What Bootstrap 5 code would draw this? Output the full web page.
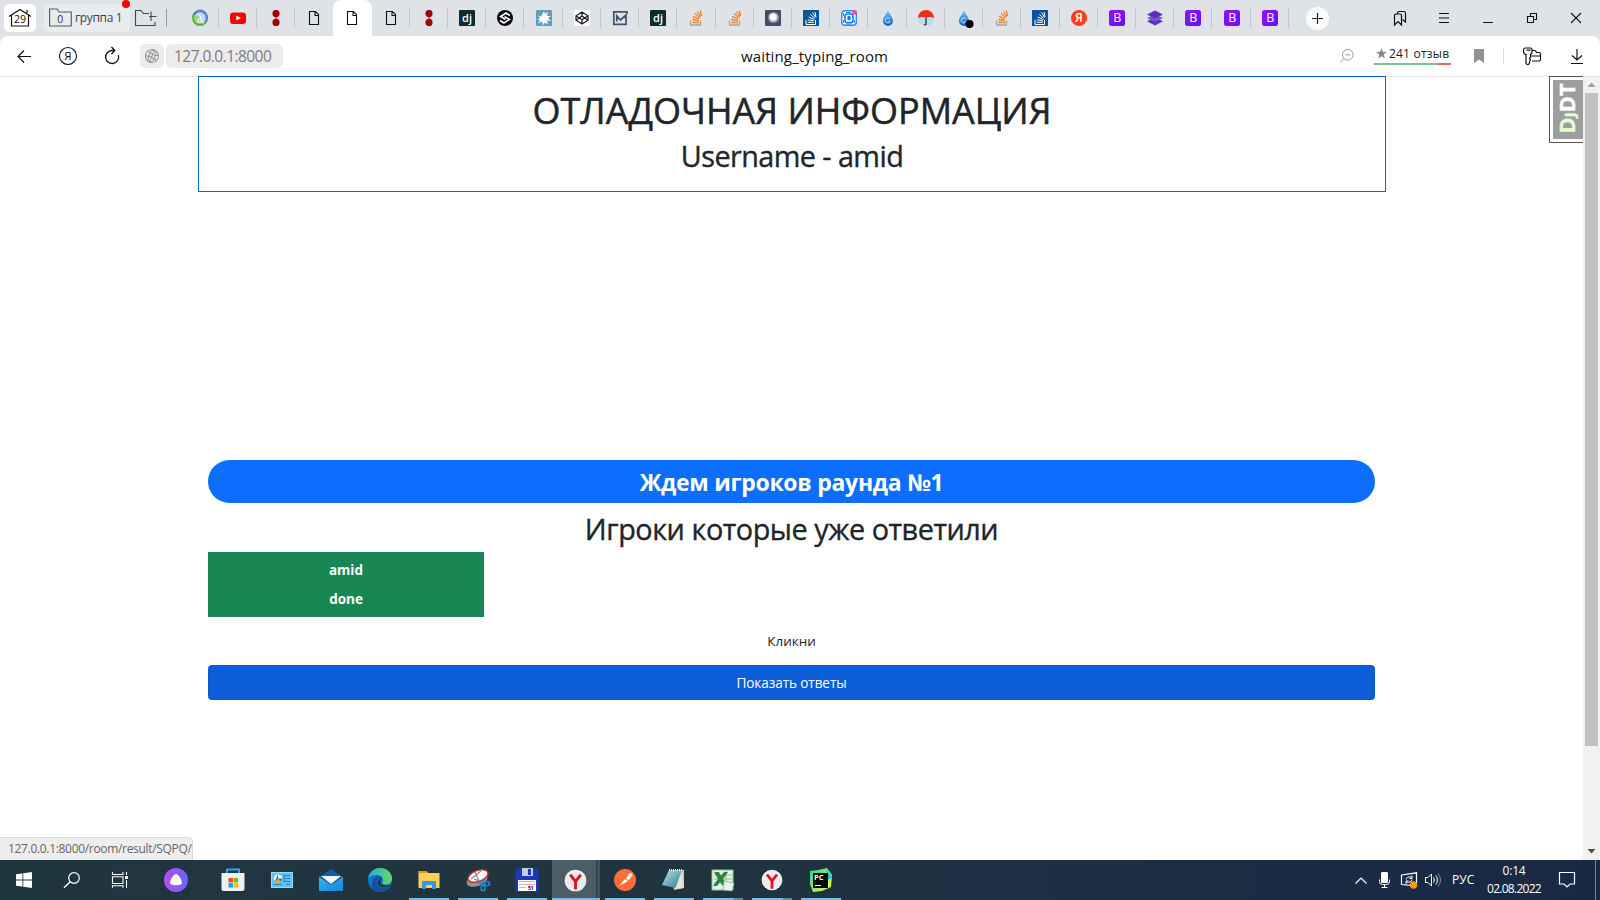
<!DOCTYPE html>
<html lang="ru">
<head>
<meta charset="utf-8">
<title>waiting_typing_room</title>
<link href="https://cdn.jsdelivr.net/npm/bootstrap@5.3.0/dist/css/bootstrap.min.css" rel="stylesheet">
<style>
body{width:1600px;height:900px;overflow:hidden;font-family:"Open Sans","Noto Sans",sans-serif;background:#dfe1e6;color:#212529}
svg{display:block;flex:none;overflow:visible}
svg text{font-family:"Open Sans","Noto Sans",sans-serif}
.tabstrip{height:36px;background:#dfe2e7}
.home{width:32px;height:28px;margin:4px 0 0 4px;background:#fff;border-radius:5px}
.group{width:86px;height:28px;margin:4px 0 0 8px;background:#e9ecef;border-radius:5px;font-size:12px;letter-spacing:-.35px;color:#444}
.group .dot{position:absolute;width:8px;height:8px;border-radius:50%;background:#f00;right:0;top:-4px}
.newgroup{width:50px;height:36px}
.tabs{width:1108.5px;height:36px;margin-left:.5px}
.tab-cell{flex:1 1 0;height:36px;position:relative;display:flex;align-items:center;justify-content:center}
.tab-cell::after{content:"";position:absolute;right:0;top:8px;height:20px;width:1px;background:#c3c6ca}
.tab-cell.current{background:#fff;border-radius:8px 8px 0 0}
.tab-cell.current::after,.tab-cell.before::after{display:none}
.plus{width:23px;height:23px;border-radius:50%;background:#fafbfc;margin-left:16.5px}
.cell44{width:44px;display:flex;align-items:center;justify-content:center}
.toolbar{height:40px;background:#fff;border-radius:8px 8px 0 0;position:relative}
.site{width:24px;height:24px;background:#ececec;border-radius:5px}
.url{width:117px;height:24px;background:#ececec;border-radius:5px;color:#7c7c7c;font-size:15.5px;line-height:25px;padding-left:8px;letter-spacing:-.55px;white-space:nowrap}
.page-title{position:absolute;left:741px;top:9px;font-size:15px;line-height:22px;color:#111;letter-spacing:.13px;white-space:nowrap}
.reviews{width:77px;height:20px;font-size:12px;line-height:18px;color:#222;letter-spacing:.2px;border-bottom:2px solid;border-image:linear-gradient(90deg,#74c794 82%,#ec6558 82%) 1;white-space:nowrap}
.viewport{height:784px;background:linear-gradient(#e4e4e4 0 1px,#fff 1px);position:relative}
.content{width:1188px;margin-left:198px}
.debug{height:116px;border:1px solid #0b66dd;background:#fff;padding-top:12px;text-align:center}
.debug h1{font-size:36px;line-height:43px;margin:0 0 6px;font-weight:500;white-space:nowrap;-webkit-text-stroke:.5px #212529}
.h-mid{font-size:28.8px;line-height:35px;font-weight:500;margin:0;white-space:nowrap;letter-spacing:-.46px;-webkit-text-stroke:.35px #212529}
.debug .h-mid{letter-spacing:-.57px}
.game{padding:268px 11px 0 10px;text-align:center}
.pill{height:43px;border-radius:22px;background:#0d6efd;color:#fff;font-weight:700;font-size:23px;line-height:45px;letter-spacing:-.28px;white-space:nowrap}
.players{width:276px;height:65px;background:#198754;color:#fff;font-weight:700;font-size:13.5px;line-height:29px;padding-top:4px}
.hint{font-size:13.5px;line-height:22px;margin:13px 0}
.answers{height:35px;background:#0b5ed7;border:1px solid #0a58ca;border-radius:3.6px;font-size:13.6px;letter-spacing:-.1px;line-height:20px;padding:7px 6px 5px;color:#fff}
.scroll-col{position:absolute;right:0;top:1px;width:17px;height:783px;background:#f1f1f1}
.thumb{width:13px;height:653px;background:#c1c1c1;margin:4px auto 0}
.arr{height:12px}
.djdt{position:absolute;left:1549px;top:0;width:34px;height:67px;border:1px solid #555;border-right:0;background:#fff;padding:3px 0 3px 3px}
.djdt>div{background:#9e9e9e;height:59px}
.status{position:absolute;left:0;bottom:0;width:193px;height:23px;background:#eee;border:1px solid #d8d8d8;border-width:1px 1px 0 0;border-radius:0 5px 0 0;font-size:12px;letter-spacing:-.32px;line-height:21px;color:#666;padding-left:8px;white-space:nowrap}
.taskbar{height:40px;background:linear-gradient(90deg,#20363f,#203440 45%,#1b2b43 80%,#192945);color:#fff}
.sys{width:48px;height:40px;display:flex;align-items:center;justify-content:center}
.app{width:49px;height:40px;display:flex;align-items:center;justify-content:center;position:relative}
.open::after{content:"";position:absolute;left:5px;width:40px;bottom:0;height:2px;background:#76b9ed}
.app.front{background:linear-gradient(90deg,transparent 0 1px,#4c5d66 1px 45px,#2d3f49 45px 46px,#42535c 46px)}
.front::after{left:1px;width:48px}
.double::after{background:linear-gradient(90deg,#76b9ed 31px,#5488b5 31px)}
.tray{font-size:12px;white-space:nowrap}
.clock{width:64px;text-align:center;line-height:18px;letter-spacing:-.2px}
.date{letter-spacing:-.72px}
</style>
</head>
<body class="d-flex flex-column">
<svg width="0" height="0" class="position-absolute">
<defs>
<linearGradient id="gB" x2="1" y2="1"><stop stop-color="#9013fe"/><stop offset="1" stop-color="#6610f2"/></linearGradient>
<linearGradient id="gDrop" x2="0" y2="1"><stop stop-color="#7cc8ff"/><stop offset="1" stop-color="#0a5fc4"/></linearGradient>
<linearGradient id="gAlice" x2="1" y2="0"><stop stop-color="#b34df5"/><stop offset="1" stop-color="#6b63ff"/></linearGradient>
<linearGradient id="gMail" x2="1" y2="1"><stop stop-color="#35b5ee"/><stop offset="1" stop-color="#1584d8"/></linearGradient>
<linearGradient id="gEdge" x2="1" y2="0"><stop stop-color="#29a8e8"/><stop offset="1" stop-color="#63dc5c"/></linearGradient>
<linearGradient id="gPc" x2="1" y2="1"><stop stop-color="#21d789"/><stop offset="1" stop-color="#fcf84a"/></linearGradient>
<linearGradient id="gNote" x2="1" y2="1"><stop stop-color="#b8e2e8"/><stop offset="1" stop-color="#2f7d92"/></linearGradient>
<symbol id="doc" viewBox="0 0 16 16"><path d="M3.500 1.500h6l3 3v10h-9zM9 1.500v4h3.500" fill="none" stroke="#111" stroke-width="1.100"/></symbol>
<symbol id="reds" viewBox="0 0 16 16"><path d="M8 4v8" stroke="#a30000"/><circle cx="8" cy="3.400" r="3.600" fill="#a80000"/><circle cx="8" cy="12.400" r="3.600" fill="#a80000"/></symbol>
<symbol id="dj" viewBox="0 0 16 16"><rect width="16" height="16" rx="1" fill="#0e2e24"/><text x="8" y="11.600" font-size="11" font-weight="600" fill="#fff" text-anchor="middle">dj</text></symbol>
<symbol id="so" viewBox="0 0 16 16"><path d="M2.500 10.500v4.500h10v-4.500" fill="none" stroke="#a2a5a9" stroke-width="1.300"/><path d="M4.500 12.500h6.500M4.200 9.500l6.600 1.200M5 6.300l6 2.900M7 3.500l5 4.300M9.300 1.500l3.600 5.200M12.300.5l1.300 5.500" stroke="#f48024" stroke-width="1.300"/></symbol>
<symbol id="sob" viewBox="0 0 16 16"><path fill="#04559b" d="M0 0h16v16H0z"/><path d="M3 10v4.500h9.500V10M4.700 12.300h6M4.800 9.800l6 1M5.700 7l5.500 2.500M7.300 4.500l4.500 3.900M9.400 2.500l3.300 5M12 2l1 5" fill="none" stroke="#fff" stroke-width="1"/></symbol>
<symbol id="bs" viewBox="0 0 16 16"><rect width="16" height="16" rx="2.500" fill="url(#gB)"/><text x="8.200" y="12.300" font-size="12.500" fill="#fff" text-anchor="middle">B</text></symbol>
<symbol id="drop" viewBox="0 0 16 16"><path d="M8 0C7 4 3 7 3 11a5 5 0 0 0 10 0C13 7 9 4 8 0z" fill="url(#gDrop)"/><path d="M9.800 9A2.500 2.500 0 1 0 10 11.500H8.500" stroke="#c4e6fb" stroke-width="1" fill="none"/></symbol>
<symbol id="ybr" viewBox="0 0 24 24"><circle cx="12" cy="12" r="11.300" fill="#ededee"/><path d="M6.500 6l5.500 7 5.500-7M12 13v8.500" fill="none" stroke="#d7191f" stroke-width="3"/></symbol>
</defs>
</svg>

<div class="tabstrip d-flex">
  <div class="home d-flex align-items-center justify-content-center"><svg width="24" height="20" viewBox="0 0 24 20"><path d="M1 8.500L12 1.500l11 7M3.500 7.500V18h17V7.500M19 2v3" fill="none" stroke="#111" stroke-width="1.200"/><text x="12" y="14.500" font-size="10.500" text-anchor="middle" fill="#111">29</text></svg></div>
  <div class="group d-flex align-items-center position-relative"><svg width="23" height="19" viewBox="0 0 23 19" style="margin:-1px 3px 0 5px"><path d="M.6 1h7.500l2 3h12.200v14H.6z" fill="none" stroke="#555" stroke-width="1.100"/><text x="11" y="14.500" font-size="10.500" fill="#333" text-anchor="middle">0</text></svg>группа 1<span class="dot"></span></div>
  <div class="newgroup"><svg width="50" height="36" viewBox="0 0 50 36"><path d="M19 13.500h-5.500L11 10.500H5.500V25.500H25V22M19 16.500h7.500M21 11.500V21" fill="none" stroke="#444" stroke-width="1.100"/><path d="M36.500 9v18" stroke="#999"/></svg></div>
  <div class="tabs d-flex">
    <div class="tab-cell"><svg width="16" height="16"><circle cx="8" cy="8" r="8" fill="#63b132"/><path d="M.5 5A8 8 0 1 1 14 13Q12 4 .500 5z" fill="#5881d8"/><circle cx="8" cy="8" r="5.700" fill="#c6d8f5"/><path d="M8 8Q5 3 3 7t3 6z" fill="#90da7b"/><path d="M6 4q3 1 3 5t3 4M7 8l-2 5" stroke="#fff" fill="none"/></svg></div>
    <div class="tab-cell"><svg width="16" height="16"><rect y="2.500" width="16" height="11.500" rx="3" fill="#f00"/><path d="M6.300 5.500v5l4.500-2.500z" fill="#fff"/></svg></div>
    <div class="tab-cell"><svg width="16" height="16"><use href="#reds"/></svg></div>
    <div class="tab-cell before"><svg width="16" height="16"><use href="#doc"/></svg></div>
    <div class="tab-cell current"><svg width="16" height="16"><use href="#doc"/></svg></div>
    <div class="tab-cell"><svg width="16" height="16"><use href="#doc"/></svg></div>
    <div class="tab-cell"><svg width="16" height="16"><use href="#reds"/></svg></div>
    <div class="tab-cell"><svg width="16" height="16"><use href="#dj"/></svg></div>
    <div class="tab-cell"><svg width="16" height="16"><circle cx="8" cy="8" r="8" fill="#080808"/><path d="M13 5.500L9 3 3.500 6.500 8.500 9.500M3 10.500L7 13l5.500-3.500L7.500 6.500" fill="none" stroke="#fff" stroke-width="1.500"/></svg></div>
    <div class="tab-cell"><svg width="16" height="16"><rect width="16" height="16" rx="1" fill="#5f9dbb"/><path d="M8 1l1 3 3-2-1 4 4 0-3 2 3 3-4-.5 1 4-3-2-2 3-1-4-4 2 2-3-3-1 3-1-2-3 3 1z" fill="#fff"/></svg></div>
    <div class="tab-cell"><svg width="16" height="16"><rect width="16" height="16" rx="2" fill="#fff"/><path d="M8 2l6 3.800v4.400L8 14l-6-3.800V5.800zM8 2v4M8 10v4M2 5.800l6 4 6-4M2 10.200L8 6l6 4.200" fill="none" stroke="#222" stroke-width="1.300"/></svg></div>
    <div class="tab-cell"><svg width="16" height="16"><path d="M15 4V1.800H1.800v12.500H14V5L8.500 10 4.800 6v5.500" fill="none" stroke="#40536a" stroke-width="1.700"/></svg></div>
    <div class="tab-cell"><svg width="16" height="16"><use href="#dj"/></svg></div>
    <div class="tab-cell"><svg width="16" height="16"><use href="#so"/></svg></div>
    <div class="tab-cell"><svg width="16" height="16"><use href="#so"/></svg></div>
    <div class="tab-cell"><svg width="16" height="16"><rect width="16" height="16" rx="1" fill="#454c66"/><circle cx="8.500" cy="7.500" r="5.500" fill="#8d93a4"/><circle cx="8.300" cy="7.300" r="4.200" fill="#d6d9e0"/><circle cx="8" cy="7" r="3" fill="#fff"/></svg></div>
    <div class="tab-cell"><svg width="16" height="16"><use href="#sob"/></svg></div>
    <div class="tab-cell"><svg width="16" height="16"><rect x=".7" y=".7" width="14.600" height="14.600" rx="3" fill="#fff" stroke="#2a86f3" stroke-width="1.400"/><rect x="4" y="4" width="8" height="8.500" rx="2" fill="none" stroke="#1476ed" stroke-width="1.600"/><ellipse cx="8" cy="8" rx="1.800" ry="2.300" fill="#1476ed"/><path d="M2.500 3v3M2.500 10v3M13.500 10v3M5 2.500h5M5 14h6" stroke="#2a86f3"/><circle cx="13.500" cy="2.500" r="2.300" fill="#ff4b5e"/></svg></div>
    <div class="tab-cell"><svg width="16" height="16"><use href="#drop"/></svg></div>
    <div class="tab-cell"><svg width="16" height="16"><circle cx="8" cy="8" r="8" fill="#aee4ea"/><path d="M0 8a8 8 0 0 1 16 0Q12 6 8 8 4 6 0 8z" fill="#f32d16"/><path d="M8 8v5.500q0 2-2 1" fill="none" stroke="#222" stroke-width="1.200"/></svg></div>
    <div class="tab-cell"><svg width="16" height="16"><use href="#drop"/><circle cx="13.500" cy="14" r="4.100"/></svg></div>
    <div class="tab-cell"><svg width="16" height="16"><use href="#so"/></svg></div>
    <div class="tab-cell"><svg width="16" height="16"><use href="#sob"/></svg></div>
    <div class="tab-cell"><svg width="16" height="16"><circle cx="8" cy="8" r="8" fill="#fc3f1d"/><text x="7.800" y="12.300" font-size="12" font-weight="600" fill="#fff" text-anchor="middle">Я</text></svg></div>
    <div class="tab-cell"><svg width="16" height="16"><use href="#bs"/></svg></div>
    <div class="tab-cell"><svg width="16" height="16"><path d="M8 7.500l8 3.800L8 15.500 0 11.300z" fill="#5d2fc0"/><path d="M8 4.500l8 3.500-8 4-8-4z" fill="#7a50d0"/><path d="M8 .500l8 4-8 4-8-4z" fill="#5d2fc0"/></svg></div>
    <div class="tab-cell"><svg width="16" height="16"><use href="#bs"/></svg></div>
    <div class="tab-cell"><svg width="16" height="16"><use href="#bs"/></svg></div>
    <div class="tab-cell"><svg width="16" height="16"><use href="#bs"/></svg></div>
  </div>
  <div class="plus align-self-center"><svg width="23" height="23"><path d="M6 11.500h11M11.500 6v11" stroke="#222" stroke-width="1.200"/></svg></div>
  <div class="d-flex ms-auto" style="margin-right:2px">
    <div class="cell44"><svg width="14" height="16"><path d="M1.500 5.500q0-1.500 1.500-1.500h4q1.500 0 1.500 1.500V15L5 11.500 1.500 15zM4.500 4V3q0-1.500 1.500-1.500h5q1.500 0 1.500 1.500v9L9.500 9.500" fill="none" stroke="#111" stroke-width="1.200"/></svg></div>
    <div class="cell44"><svg width="10" height="10"><path d="M0 .5h10M0 5h10M0 9.500h10" stroke="#111"/></svg></div>
    <div class="cell44"><svg width="10" height="10"><path d="M0 9.500h10" stroke="#111"/></svg></div>
    <div class="cell44"><svg width="10" height="10"><path d="M.5 3.500h6v6h-6zM3.500 3.500v-3h6v6h-3" fill="none" stroke="#111" stroke-width="1.100"/></svg></div>
    <div class="cell44"><svg width="10" height="10"><path d="M0 0l10 10M10 0L0 10" stroke="#111" stroke-width="1.100"/></svg></div>
  </div>
</div>

<div class="toolbar d-flex align-items-center">
  <div class="d-flex" style="margin-left:2px">
    <div class="cell44"><svg width="14" height="14"><path d="M14 7.500H.7M7 1.500L1 7.500l6 6" fill="none" stroke="#111" stroke-width="1.200"/></svg></div>
    <div class="cell44"><svg width="18" height="18"><circle cx="9" cy="9" r="8.500" fill="none" stroke="#111" stroke-width="1.100"/><text x="8.800" y="13.200" font-size="11.500" text-anchor="middle" fill="#111">Я</text></svg></div>
    <div class="cell44"><svg width="16" height="18"><path d="M14.300 8A6.500 6.500 0 1 1 8 3.500h2.500M7.500 0l3.300 3.500-3.300 3.500" fill="none" stroke="#111" stroke-width="1.300"/></svg></div>
  </div>
  <div class="site d-flex align-items-center justify-content-center" style="margin:0 2px 0 6px"><svg width="14" height="14"><g fill="none" stroke="#919191" transform="rotate(25 7 7)"><circle cx="7" cy="7" r="6.500"/><ellipse cx="7" cy="7" rx="3" ry="6.500"/><path d="M7 .5v13M1.500 4q5.500 2.500 11 0M1 9.500q6-2.500 12 0"/></g></svg></div>
  <div class="url">127.0.0.1:8000</div>
  <div class="page-title">waiting_typing_room</div>
  <div class="d-flex align-items-center ms-auto" style="margin-right:17px">
    <svg width="14" height="14"><circle cx="7.800" cy="5.800" r="5.300" fill="none" stroke="#999"/><path d="M5.300 5.800h5M4 9.500L.5 13" stroke="#999"/></svg>
    <div class="reviews d-flex" style="margin:-3px 0 0 20px"><svg width="15" height="16"><path d="M7.500 3l1.400 3.800 4 .2-3.100 2.600 1 3.900-3.300-2.200-3.300 2.200 1-3.900L2.100 7l4-.2z" fill="#888"/></svg><span>241 отзыв</span></div>
    <svg width="10" height="14" style="margin-left:23px"><path d="M0 0h10v14L5 10.500 0 14z" fill="#919191"/></svg>
    <span style="width:1px;height:16px;background:#ddd;margin-left:19px"></span>
    <svg width="18" height="18" style="margin-left:19px"><path d="M2.500 1h5q1.500 0 1.500 1.500V5q0 1.500-1.500 2.500v3l-1 1 1 1.500-1 1.500V16L5.500 17.500H4L3 16V7.500Q.6 7 .6 5V2.500Q.6 1 2.500 1zM3.500 3.200h4M9.500 3.500h2.500q1 0 1 1t1 1h2q1.500 0 1.500 1.500v5.500q0 1.500-1.500 1.500H9M8 9h9.500" fill="none" stroke="#111" stroke-width="1.200"/></svg>
    <svg width="12" height="16" style="margin-left:30px"><path d="M6 1v11M1 7.500L6 12l5-4.500M0 15.500h12" fill="none" stroke="#111" stroke-width="1.200"/></svg>
  </div>
</div>

<main class="viewport">
  <div class="content">
    <header class="debug"><h1>ОТЛАДОЧНАЯ ИНФОРМАЦИЯ</h1><h2 class="h-mid">Username - amid</h2></header>
    <section class="game">
      <div class="pill">Ждем игроков раунда №1</div>
      <h2 class="h-mid" style="margin:8px 0 6px">Игроки которые уже ответили</h2>
      <div class="players"><div>amid</div><div>done</div></div>
      <p class="hint">Кликни</p>
      <a class="btn btn-primary d-block answers">Показать ответы</a>
    </section>
  </div>
  <div class="djdt"><div><svg width="30" height="59"><text transform="translate(22 53.500) rotate(-90)" font-size="21" font-weight="700" fill="#e4ffcf" stroke="#e4ffcf" stroke-width=".4" textLength="50" lengthAdjust="spacingAndGlyphs">D<tspan font-size="15">J</tspan><tspan fill="#fff" stroke="#fff">DT</tspan></text></svg></div></div>
  <div class="scroll-col"><div class="arr"><svg width="17" height="12"><path d="M4.500 10h8L8.500 5.500z" fill="#a0a0a0"/></svg></div><div class="thumb"></div><svg width="17" height="114"><path d="M4.500 103h8l-4 4.500z" fill="#505050"/></svg></div>
  <div class="status">127.0.0.1:8000/room/result/SQPQ/</div>
</main>

<footer class="taskbar d-flex">
  <div class="sys"><svg width="16" height="16"><path d="M0 2.300L6.500 1.400v6.200H0zM7.300 1.300L16 0v7.600H7.300zM0 8.400h6.500v6.200L0 13.700zM7.300 8.400H16V16l-8.700-1.300z" fill="#fff"/></svg></div>
  <div class="sys"><svg width="16" height="16"><circle cx="10" cy="6" r="5.300" fill="none" stroke="#fff" stroke-width="1.200"/><path d="M6.200 9.800L0 15.800" stroke="#fff" stroke-width="1.400"/></svg></div>
  <div class="sys"><svg width="16" height="16"><path d="M.5 0v2.500h10.500V0M.5 4.800h10.500v6.700H.5zM.5 15.800v-2h10.500v2M14.500 0v3M14.500 8v8" fill="none" stroke="#fff" stroke-width="1.100"/><path d="M13 4h3v3h-3z" fill="#fff"/></svg></div>
  <div class="sys" style="width:64px"><svg width="24" height="24"><circle cx="12" cy="12" r="12" fill="url(#gAlice)"/><path d="M12 6c2.500 0 6 6.500 6 9 0 3-12 3-12 0 0-2.500 3.500-9 6-9z" fill="#fff"/></svg></div>
  <div class="app"><svg width="24" height="24"><path d="M6 6V1.500h12V6" fill="none" stroke="#28a8ea" stroke-width="2"/><path d="M.5 5h23v16q0 2-2 2h-19q-2 0-2-2z" fill="#f0f0f0"/><path d="M7.500 10H12v4.500H7.500z" fill="#f25022"/><path d="M12.700 10h4.500v4.500h-4.500z" fill="#7fba00"/><path d="M7.500 15.200H12v4.300H7.500z" fill="#00a4ef"/><path d="M12.700 15.200h4.500v4.300h-4.500z" fill="#ffb900"/></svg></div>
  <div class="app"><svg width="22" height="16"><rect x=".5" y=".5" width="21" height="15" fill="#5fc0f2" stroke="#98dcfa"/><circle cx="7" cy="6.500" r="4" fill="#fff"/><path d="M7 2.500v4h4a4 4 0 0 1-7 2.500z" fill="#1765b0"/><path d="M7 6.500l3 3a4 4 0 0 1-6 0z" fill="#f5a623"/><path d="M13 3.500h6M13 6.500h6M13 9.500h6M13 3v7M3 12.500h8M15 12.500h4" stroke="#2a83c4" fill="none"/></svg></div>
  <div class="app"><svg width="24" height="24"><path d="M0 9l12-8 12 8v14H0z" fill="#0f5ca7"/><path d="M0 9l12 8 12-8v14H0z" fill="url(#gMail)"/><path d="M2 8h20l-10 8z" fill="#f4f4f4"/></svg></div>
  <div class="app"><svg width="24" height="24"><circle cx="12" cy="12" r="12" fill="#0f72c9"/><path d="M0 11C1 4 6 0 12 0c7 0 12 5 12 10.500 0 3.500-3 6-6 6-4 0-4-1.500-3-3C16 9 12 6.500 8 7c-4 .3-7 2-8 4z" fill="url(#gEdge)"/><path d="M14 11c-4-2-6 2-5 5 1.200 4 7 5 12.500 2C17 25 10 25 6.500 22.500 2 18 4 9 10 8.500c2 0 4 1 4 2.500z" fill="#1550a0"/><path d="M14 11c-3 2-1 6 3 6.500 2.500.3 4.500-.5 5.500-1.500l-1 2C16 21 10 19 9.500 15c0-2 2-5 4.500-4z" fill="#20363f"/></svg></div>
  <div class="app open"><svg width="22" height="20"><path d="M.5 1h8l1.500 2h11.500v15H.5z" fill="#fccf5b"/><path d="M.5 1h8l1.500 2H.5z" fill="#d99b13"/><path d="M4 19v-8h14v8h-4v-4H8v4z" fill="#3f95db"/></svg></div>
  <div class="app open"><svg width="24" height="24"><ellipse cx="11" cy="12" rx="11" ry="6" transform="rotate(-20 11 12)" fill="#8c959a"/><ellipse cx="12" cy="8" rx="10.500" ry="5.500" transform="rotate(-20 12 8)" fill="#fff" stroke="#d7242c" stroke-width="1.500"/><path d="M5 11l10-8M9 4l4 9-5-2" stroke="#888" stroke-width="1.200" fill="none"/><g fill="none" stroke="#2583cb" stroke-width="1.700"><ellipse cx="17" cy="20" rx="2" ry="2.700"/><ellipse cx="21" cy="15.500" rx="2.500" ry="2"/><path d="M13 14.500l6 3M17.500 11.500L16 18"/></g></svg></div>
  <div class="app open"><svg width="24" height="24"><path d="M.5.500h21l2 2v21H.5z" fill="#1b38ba"/><path d="M7 0h11v8H7z" fill="#c7ccdf"/><path d="M13 1h3v6h-3z" fill="#1b38ba"/><path d="M3 12h18v11H3z" fill="#fff"/><path d="M4 13.500h16M4 16.500h16M4 19.500h7" stroke="#f0a0a0"/><text x="13" y="22" font-size="5" font-weight="700">51</text></svg></div>
  <div class="app open front"><svg width="23" height="23"><use href="#ybr"/></svg></div>
  <div class="app open"><svg width="22" height="22"><circle cx="11" cy="11" r="11" fill="#ff6c37"/><path d="M5 17l6-7 3 2-7 4zM12 9l3-3 2 1-1 3-2 1z" fill="#fff"/><circle cx="16.500" cy="6" r="2" fill="#fff"/></svg></div>
  <div class="app open"><svg width="24" height="22"><path d="M7 1h15v18L12 21z" fill="#c9c6b8"/><path d="M7 1h13l-6 18L0 16z" fill="url(#gNote)"/><path d="M7 1h13" stroke="#f3f3f3" stroke-width="2" stroke-dasharray="1 1"/><path d="M20 2l2 17-9 1z" fill="#e7e3d2"/></svg></div>
  <div class="app open double"><svg width="22" height="22"><path d="M0 1h21v20H0z" fill="#e6f0e6" stroke="#91c293"/><path d="M14 2v18M2 6h18M2 10h18M2 14h18" stroke="#8bbf90"/><path d="M2 3l5 0 2 4 3-4h4l-5 7 5 7h-5l-3-4-3 4H1l5-7z" fill="#27843d"/><path d="M12 12l10 2-2 8-9-1z" fill="#eaf3eb" stroke="#72ad7b" stroke-width=".7"/></svg></div>
  <div class="app open double"><svg width="22" height="22"><use href="#ybr"/></svg></div>
  <div class="app open"><svg width="24" height="24"><path d="M1 3l8-1 9-2 5 7-1 12-9 4-9 1-3-8z" fill="url(#gPc)"/><path d="M17 1l6 8-4 3z" fill="#07c3f2"/><path d="M4 5h15v15H4z" fill="#000"/><text x="5" y="12" font-size="7.500" font-weight="700" fill="#fff">PC</text><path d="M6 17.500h6" stroke="#fff"/></svg></div>
  <div class="tray d-flex align-items-center ms-auto">
    <svg width="12" height="7"><path d="M.5 6.500L6 1l5.500 5.500" fill="none" stroke="#fff" stroke-width="1.200"/></svg>
    <svg width="11" height="16" style="margin-left:12px"><rect x="2" width="7" height="11" rx="1" fill="#fff"/><path d="M.5 7.500v2q0 3 3 3h4q3 0 3-3v-2M5.500 12.500v3M2.500 15.500h6" fill="none" stroke="#fff"/></svg>
    <svg width="16" height="16" style="margin-left:11px"><path d="M.5 3L15.500.8v13L.5 12.500z" fill="none" stroke="#fff" stroke-width="1.200"/><path d="M5 7.500Q5.500 4.500 10.500 5M11 3.500v3H8.500M11 7.500Q10 11 5.500 10M5 12V9h2.500" fill="none" stroke="#fff"/><circle cx="12.500" cy="13" r="3.700" fill="#ff9800"/></svg>
    <svg width="17" height="14" style="margin-left:8px"><path d="M.5 4.500H3L6.500 1v12L3 9.500H.5z" fill="none" stroke="#fff"/><path d="M8.500 4.500q2 2.500 0 5M10.800 2.500q3.300 4.500 0 9" fill="none" stroke="#fff"/><path d="M13 .5q5 6.500 0 13" fill="none" stroke="#8592a3"/></svg>
    <span style="width:22px;margin-left:10px">РУС</span>
    <div class="clock" style="margin-left:8px"><div>0:14</div><div class="date">02.08.2022</div></div>
    <svg width="16" height="16" style="margin-left:13px"><path d="M.5.500h15v11.500h-4.500L8 15l-3-3H.5z" fill="none" stroke="#fff" stroke-width="1.200"/></svg>
    <span style="width:1px;height:40px;background:#7c8798;margin:0 4px 0 20px"></span>
  </div>
</footer>
</body>
</html>
